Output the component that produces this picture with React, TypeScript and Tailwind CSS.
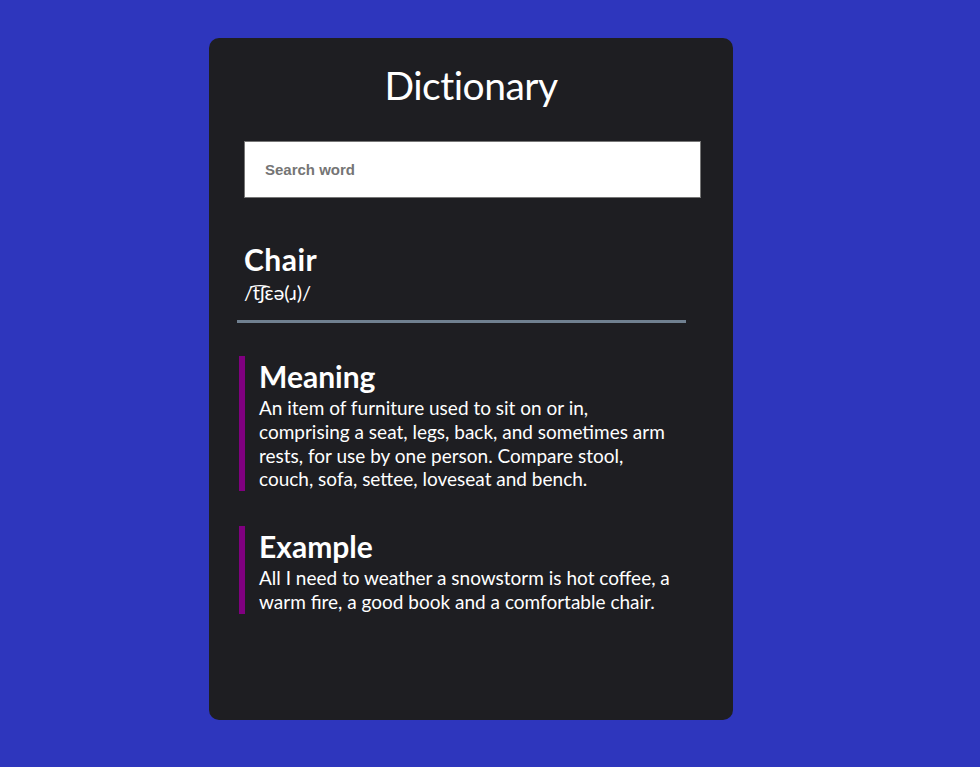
import React from "react";

const font = { fontFamily: "Lato, 'Noto Sans', sans-serif" };

export default function App() {
  return (
    <div className="min-h-screen w-full bg-[#2e36bd] flex justify-center pt-[38px] pr-[38px]" style={font}>
      <div className="w-[524px] h-[682px] bg-[#1e1e22] rounded-[10px] flex flex-col text-white">
        <h1 className="text-center text-[39px] leading-none font-normal mt-[28px] tracking-[-0.5px]">Dictionary</h1>
        <div className="mt-[36px] px-[35px]">
          <input
            type="text"
            placeholder="Search word"
            autoFocus
            className="w-[457px] h-[57px] bg-white border border-[#767676] px-[20px] text-[15px] font-bold text-black placeholder:text-[#757575] outline-none"
            style={{ fontFamily: "'Liberation Sans', Arial, sans-serif" }}
          />
        </div>
        <div className="mt-[44px] px-[35px]">
          <h2 className="text-[30px] font-bold leading-[34px] tracking-[0.5px]">Chair</h2>
          <p className="text-[20px] leading-[24px] mt-[4px]">/t͡ʃɛə(ɹ)/</p>
        </div>
        <div className="ml-[28px] w-[449px] h-[3px] bg-[#708090] mt-[16px]" />
        <section className="ml-[30px] mt-[33px] border-l-[6px] border-[#800080] pl-[14px] w-[440px]">
          <h3 className="text-[30px] font-bold leading-[40px]">Meaning</h3>
          <p className="text-[19px] leading-[23.75px]">
            An item of furniture used to sit on or in,
            <br />
            comprising a seat, legs, back, and sometimes arm
            <br />
            rests, for use by one person. Compare stool,
            <br />
            couch, sofa, settee, loveseat and bench.
          </p>
        </section>
        <section className="ml-[30px] mt-[35px] border-l-[6px] border-[#800080] pl-[14px] w-[440px]">
          <h3 className="text-[30px] font-bold leading-[40px]">Example</h3>
          <p className="text-[19px] leading-[23.75px]">
            All I need to weather a snowstorm is hot coffee, a
            <br />
            warm fire, a good book and a comfortable chair.
          </p>
        </section>
      </div>
    </div>
  );
}
